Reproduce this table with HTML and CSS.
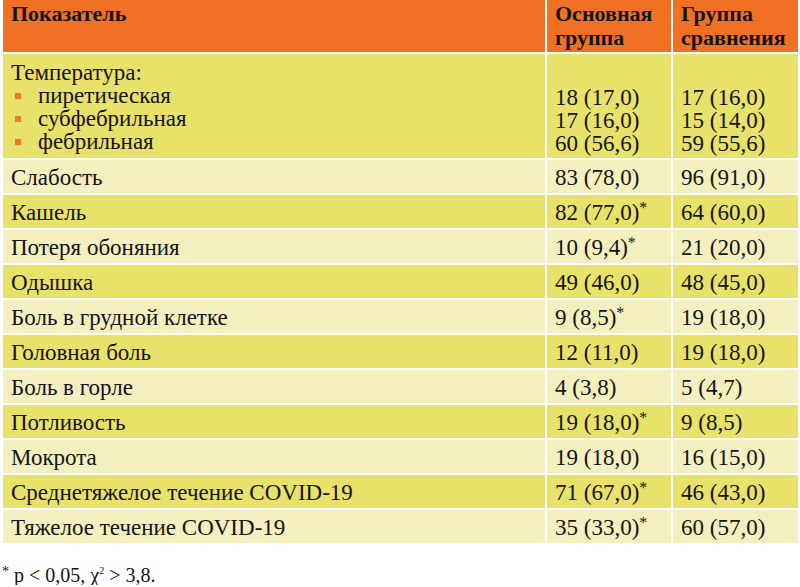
FILE: index.html
```html
<!DOCTYPE html>
<html lang="ru">
<head>
<meta charset="utf-8">
<link rel="stylesheet" href="styles.css">
</head>
<body>
<table class="tbl">
  <colgroup><col class="c1"><col class="c2"><col class="c3"></colgroup>
  <thead>
    <tr><th>Показатель</th><th>Основная группа</th><th>Группа сравнения</th></tr>
  </thead>
  <tbody>
    <tr class="dark temp">
      <td>Температура:
        <ul class="bul"><li>пиретическая</li><li>субфебрильная</li><li>фебрильная</li></ul>
      </td>
      <td class="bottom">18 (17,0)<br>17 (16,0)<br>60 (56,6)</td>
      <td class="bottom">17 (16,0)<br>15 (14,0)<br>59 (55,6)</td>
    </tr>
    <tr class="light"><td>Слабость</td><td>83 (78,0)</td><td>96 (91,0)</td></tr>
    <tr class="dark"><td>Кашель</td><td>82 (77,0)<sup>*</sup></td><td>64 (60,0)</td></tr>
    <tr class="light"><td>Потеря обоняния</td><td>10 (9,4)<sup>*</sup></td><td>21 (20,0)</td></tr>
    <tr class="dark"><td>Одышка</td><td>49 (46,0)</td><td>48 (45,0)</td></tr>
    <tr class="light"><td>Боль в грудной клетке</td><td>9 (8,5)<sup>*</sup></td><td>19 (18,0)</td></tr>
    <tr class="dark"><td>Головная боль</td><td>12 (11,0)</td><td>19 (18,0)</td></tr>
    <tr class="light"><td>Боль в горле</td><td>4 (3,8)</td><td>5 (4,7)</td></tr>
    <tr class="dark"><td>Потливость</td><td>19 (18,0)<sup>*</sup></td><td>9 (8,5)</td></tr>
    <tr class="light"><td>Мокрота</td><td>19 (18,0)</td><td>16 (15,0)</td></tr>
    <tr class="dark"><td>Среднетяжелое течение COVID-19</td><td>71 (67,0)<sup>*</sup></td><td>46 (43,0)</td></tr>
    <tr class="light"><td>Тяжелое течение COVID-19</td><td>35 (33,0)<sup>*</sup></td><td>60 (57,0)</td></tr>
  </tbody>
</table>
<p class="note"><sup>*</sup> p &lt; 0,05, χ<sup class="pow">2</sup> &gt; 3,8.</p>
</body>
</html>
```
FILE: styles.css
```css
html, body {
  margin: 0;
  padding: 0;
  background: #fff;
}
body {
  font-family: "Liberation Serif", "DejaVu Serif", serif;
  color: #141414;
  padding-left: 1px;
}
.tbl {
  border-collapse: collapse;
  width: 797px;
  table-layout: fixed;
  font-size: 23px;
}
.c1 { width: 544px; }
.c2 { width: 126px; }
.c3 { width: 127px; }
.tbl th, .tbl td {
  border: 2px solid #fff;
  text-align: left;
  padding: 0 8px;
}
.tbl tr:first-child th { border-top: 0; }
.tbl th {
  background: #F07124;
  font-weight: bold;
  vertical-align: top;
  height: 50px;
  padding-top: 2px;
  line-height: 24px;
  font-size: 22px;
}
.tbl td {
  height: 31px;
  line-height: 23px;
  vertical-align: middle;
  padding-top: 2px;
  padding-bottom: 0;
}
.dark td { background: #E8E16A; }
.light td { background: #F3EFBE; }
.tbl .temp td {
  height: 94px;
  padding-top: 7px;
  padding-bottom: 3px;
}
.tbl .temp td.bottom { vertical-align: bottom; }
.tbl .temp td:first-child { vertical-align: top; }
.bul {
  list-style: none;
  margin: 0;
  padding: 0;
}
.bul li {
  display: flex;
  align-items: center;
}
.bul li::before {
  content: "";
  width: 6px;
  height: 6px;
  background: #EE7A32;
  margin-left: 4px;
  margin-right: 17px;
  flex: none;
}
sup {
  font-size: 0.7em;
  line-height: 0;
  vertical-align: 0.45em;
}
.note {
  margin: 20px 0 0 1px;
  font-size: 20px;
  line-height: 20px;
}
.note .pow {
  font-size: 0.5em;
  vertical-align: 0.8em;
}
```
